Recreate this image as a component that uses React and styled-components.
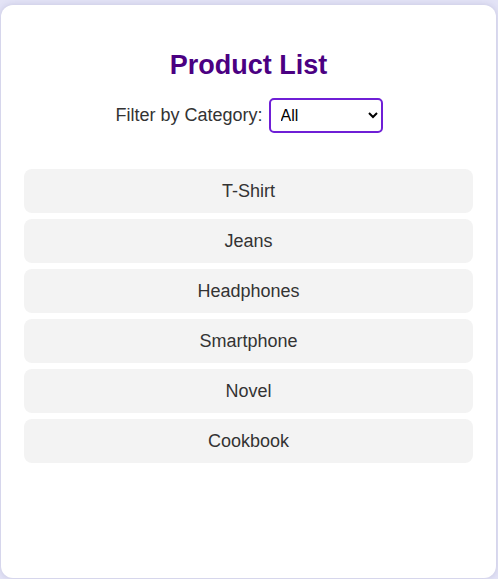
import styled, { createGlobalStyle } from "styled-components";

const GlobalStyle = createGlobalStyle`
  html, body {
    margin: 0;
    padding: 0;
    background-color: #e3e3f6;
    font-family: "Liberation Sans", Arial, sans-serif;
  }
`;

const Page = styled.div`
  padding: 5px 2px 0 1px;
  height: 574px;
  overflow: hidden;
`;

const Card = styled.div`
  background-color: #ffffff;
  border-radius: 12px;
  box-shadow: 0 0 6px rgba(80, 80, 140, 0.2);
  padding: 45px 23px 0 23px;
  height: 573px;
  box-sizing: border-box;
`;

const Title = styled.h2`
  margin: 0;
  text-align: center;
  color: #4b0082;
  font-size: 27px;
  font-weight: bold;
`;

const FilterRow = styled.div`
  display: flex;
  justify-content: center;
  align-items: center;
  gap: 6px;
  margin-top: 17px;
  padding-left: 1px;
  font-size: 18px;
  color: #333333;
`;

const Select = styled.select`
  width: 114px;
  height: 35px;
  padding: 0 6px;
  font-family: "Liberation Sans", Arial, sans-serif;
  font-size: 16px;
  color: #000000;
  background: #ffffff;
  border: 2px solid #6f1fd6;
  border-radius: 5px;
  outline: none;
`;

const List = styled.ul`
  list-style: none;
  margin: 36px 0 0 0;
  padding: 0;
  display: flex;
  flex-direction: column;
  gap: 6px;
`;

const Item = styled.li`
  background-color: #f3f3f3;
  border-radius: 8px;
  height: 44px;
  display: flex;
  align-items: center;
  justify-content: center;
  font-size: 18px;
  color: #333333;
`;

const products = ["T-Shirt", "Jeans", "Headphones", "Smartphone", "Novel", "Cookbook"];

export default function App() {
  return (
    <>
      <GlobalStyle />
      <Page>
        <Card>
          <Title>Product List</Title>
          <FilterRow>
            <label htmlFor="category">Filter by Category:</label>
            <Select id="category" defaultValue="All">
              <option>All</option>
              <option>Clothing</option>
              <option>Electronics</option>
              <option>Books</option>
            </Select>
          </FilterRow>
          <List>
            {products.map((p) => (
              <Item key={p}>{p}</Item>
            ))}
          </List>
        </Card>
      </Page>
    </>
  );
}
